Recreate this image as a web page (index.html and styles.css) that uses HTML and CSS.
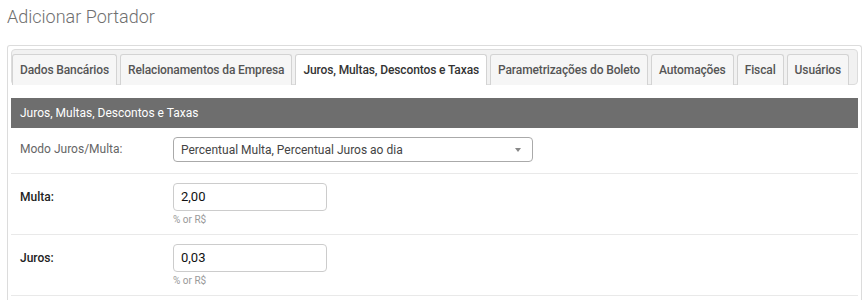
FILE: index.html
```html
<!DOCTYPE html>
<html lang="pt">
<head>
<meta charset="utf-8">
<title>Adicionar Portador</title>
<link rel="stylesheet" href="styles.css">
</head>
<body>
<h1 class="page-title">Adicionar Portador</h1>
<div class="panel">
  <ul class="tabs">
    <li class="tab">Dados Bancários</li>
    <li class="tab">Relacionamentos da Empresa</li>
    <li class="tab active">Juros, Multas, Descontos e Taxas</li>
    <li class="tab">Parametrizações do Boleto</li>
    <li class="tab">Automações</li>
    <li class="tab">Fiscal</li>
    <li class="tab">Usuários</li>
  </ul>
  <div class="section-head">Juros, Multas, Descontos e Taxas</div>
  <div class="row row-select">
    <label class="label">Modo Juros/Multa:</label>
    <div class="field">
      <div class="select">
        <span>Percentual Multa, Percentual Juros ao dia</span>
        <span class="caret"></span>
      </div>
    </div>
  </div>
  <div class="row">
    <label class="label bold">Multa:</label>
    <div class="field">
      <div class="input">2,00</div>
      <div class="hint">% or R$</div>
    </div>
  </div>
  <div class="row">
    <label class="label bold">Juros:</label>
    <div class="field">
      <div class="input">0,03</div>
      <div class="hint">% or R$</div>
    </div>
  </div>
</div>
</body>
</html>
```
FILE: styles.css
```css
* { box-sizing: border-box; }
html, body { margin: 0; padding: 0; background: #fff; }
body {
  font-family: Roboto, "Liberation Sans", sans-serif;
  color: #333;
  overflow: hidden;
  height: 300px;
}
.page-title {
  margin: 0;
  padding: 6px 0 0 7px;
  height: 45px;
  font-size: 18px;
  font-weight: 300;
  color: #6f6f6f;
  line-height: 22px;
}
.panel {
  margin-left: 7px;
  width: 855px;
  border: 1px solid #dcdcdc;
  border-bottom: none;
  border-radius: 3px 3px 0 0;
  padding: 3px 3px 0 3px;
  height: 255px;
  overflow: hidden;
}
.tabs {
  list-style: none;
  margin: 0;
  padding: 4px 0 0 0;
  display: flex;
  gap: 3px;
  border: 1px solid #dcdcdc;
  border-radius: 4px;
  background: #f1f1f1;
  height: 36px;
}
.tab {
  height: 31px;
  padding: 0 7px;
  display: flex;
  align-items: center;
  font-size: 12px;
  font-weight: 500;
  letter-spacing: -0.12px;
  color: #555;
  background: #f6f6f6;
  border: 1px solid #d3d3d3;
  border-bottom: none;
  border-radius: 3px 3px 0 0;
  white-space: nowrap;
}
.tab.active {
  background: #fff;
  color: #333;
}
.section-head {
  margin-top: 13px;
  height: 30px;
  background: #6e6e6e;
  color: #fff;
  font-size: 12px;
  line-height: 30px;
  padding-left: 9px;
}
.row {
  display: flex;
  align-items: flex-start;
  border-bottom: 1px solid #e9e9e9;
  padding: 9px 0 0 9px;
  height: 61px;
}
.row-select { height: 46px; }
.label {
  width: 153px;
  font-size: 12px;
  color: #666;
  line-height: 28px;
}
.row-select .label { line-height: 25px; }
.label.bold { font-weight: 500; color: #222; }
.field { display: flex; flex-direction: column; }
.select {
  width: 360px;
  height: 25px;
  border: 1px solid #aaa;
  border-radius: 4px;
  display: flex;
  align-items: center;
  justify-content: space-between;
  padding: 0 11px 0 7px;
  font-size: 12px;
  color: #444;
}
.caret {
  width: 0; height: 0;
  border-left: 3px solid transparent;
  border-right: 3px solid transparent;
  border-top: 4px solid #888;
}
.input {
  width: 154px;
  height: 28px;
  border: 1px solid #ccc;
  border-radius: 4px;
  padding: 0 7px;
  font-size: 13px;
  line-height: 26px;
  color: #111;
}
.hint {
  margin-top: 2px;
  font-size: 10px;
  color: #999;
  line-height: 13px;
}
```
